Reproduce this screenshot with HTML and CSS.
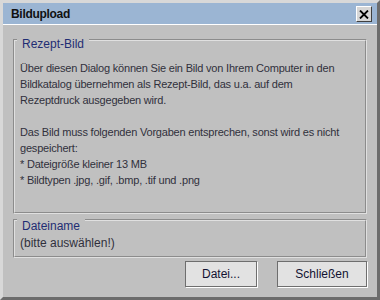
FILE: index.html
```html
<!DOCTYPE html>
<html lang="de">

<head>
    <meta charset="UTF-8">
    <title>Bildupload</title>
    <link rel="stylesheet" href="styles.css">
</head>

<body>
    <div class="dialog">
        <div class="titlebar">
            <span class="title">Bildupload</span>
            <button class="close" type="button">
                <svg width="10" height="9" viewBox="0 0 10 9">
                    <path d="M1 0.5 L9 8.5 M9 0.5 L1 8.5" stroke="#000" stroke-width="1.8" />
                </svg>
            </button>
        </div>

        <div class="content">
            <fieldset class="group info">
                <legend>Rezept-Bild</legend>
                <p>Über diesen Dialog können Sie ein Bild von Ihrem Computer in den<br>
                    Bildkatalog übernehmen als Rezept-Bild, das u.a. auf dem<br>
                    Rezeptdruck ausgegeben wird.</p>
                <p>Das Bild muss folgenden Vorgaben entsprechen, sonst wird es nicht<br>
                    gespeichert:<br>
                    * Dateigröße kleiner 13 MB<br>
                    * Bildtypen .jpg, .gif, .bmp, .tif und .png</p>
            </fieldset>

            <fieldset class="group file">
                <legend>Dateiname</legend>
                <div class="filename">(bitte auswählen!)</div>
            </fieldset>

            <div class="actions">
                <button class="btn btn-file" type="button">Datei...</button>
                <button class="btn btn-close" type="button">Schließen</button>
            </div>
        </div>
    </div>
</body>

</html>
```

FILE: styles.css
```css
body {
    margin: 0;
    font-family: "Liberation Sans", Arial, sans-serif;
}

.dialog {
    width: 380px;
    height: 300px;
    box-sizing: border-box;
    border: 3px solid;
    border-color: #d8d8d8 #6c6c6c #6c6c6c #d8d8d8;
    background-color: #c0c0c0;
    display: flex;
    flex-direction: column;
}

.titlebar {
    height: 21px;
    background-color: #9bb5d3;
    border-bottom: 1px solid #ffffff;
    display: flex;
    align-items: center;
    justify-content: space-between;
    padding: 0 5px 0 8px;
}

.title {
    font-weight: bold;
    font-size: 12px;
    letter-spacing: -0.3px;
    color: #111111;
}

.close {
    width: 16px;
    height: 16px;
    padding: 0;
    margin-top: 1px;
    background-color: #d6d6d6;
    border: 1px solid;
    border-color: #ffffff #404040 #404040 #ffffff;
    display: flex;
    align-items: center;
    justify-content: center;
}

.content {
    flex: 1;
    padding: 11px 10px 0 10px;
    display: flex;
    flex-direction: column;
}

.group {
    margin: 0;
    border: 2px groove #e0e0e0;
    padding: 0 4px 0 2px;
}

/* text sits a bit below the border line, like the swing titled border */
.group legend {
    font-size: 12px;
    line-height: 0;
    color: #1f2d73;
    padding: 8px 5px 0 5px;
}

.info {
    padding-bottom: 24px;
}

.info p {
    margin: 16px 0 0 3px;
    font-size: 11px;
    line-height: 16px;
    letter-spacing: -0.2px;
    white-space: nowrap;
    color: #30303c;
}

.file legend {
    padding-top: 12px;
}

.file {
    padding-bottom: 5px;
}

.filename {
    margin: 9px 0 0 3px;
    font-size: 12px;
    line-height: 16px;
    color: #30303c;
}

.actions {
    display: flex;
    justify-content: flex-end;
    gap: 20px;
    padding-top: 3px;
}

.btn {
    height: 26px;
    padding: 0;
    font-family: "Liberation Sans", Arial, sans-serif;
    font-size: 12px;
    color: #121232;
    background-color: #e2e2e2;
    border: 1px solid #6e6e6e;
    box-shadow: 1px 1px 0 #ffffff;
}

.btn-file {
    width: 72px;
}

.btn-close {
    width: 90px;
}
```
